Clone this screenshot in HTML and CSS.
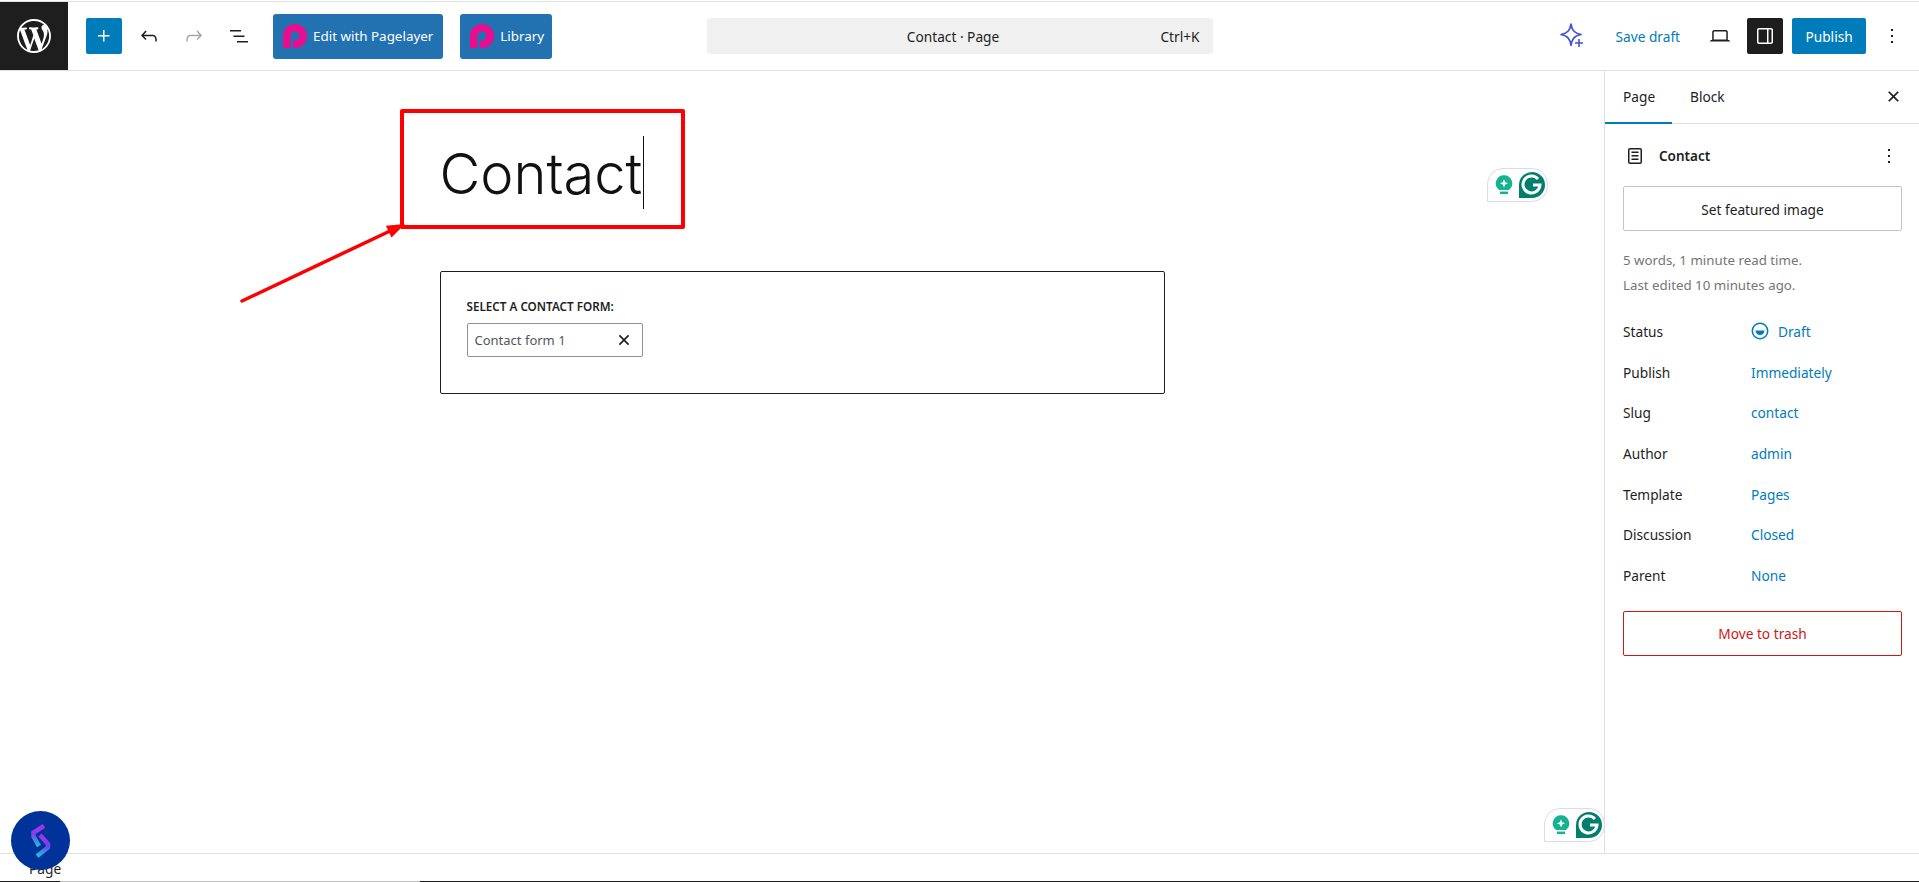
FILE: index.html
```html
<!DOCTYPE html>
<html lang="en">
<head>
<meta charset="utf-8">
<title>Contact</title>
<link rel="stylesheet" href="styles.css">
</head>
<body>
<header class="topbar">
  <div class="tools">
    <div class="wp-logo"><svg width="34" height="34" viewBox="0 0 20 20"><path fill="#fff" d="M20 10c0-5.51-4.49-10-10-10C4.48 0 0 4.49 0 10c0 5.52 4.48 10 10 10 5.51 0 10-4.48 10-10zM7.78 15.37L4.37 6.22c.55-.02 1.17-.08 1.17-.08.5-.06.44-1.13-.06-1.11 0 0-1.45.11-2.37.11-.18 0-.37 0-.58-.01C4.12 2.69 6.87 1.11 10 1.11c2.33 0 4.45.87 6.05 2.34-.68-.11-1.65.39-1.65 1.58 0 .74.45 1.36.9 2.1.35.61.55 1.36.55 2.46 0 1.49-1.4 5-1.4 5l-3.03-8.37c.54-.02.82-.17.82-.17.5-.05.44-1.25-.06-1.22 0 0-1.44.12-2.38.12-.87 0-2.33-.12-2.33-.12-.5-.03-.56 1.2-.06 1.22l.92.08 1.26 3.41zM17.41 10c.24-.64.74-1.87.43-4.25.7 1.29 1.05 2.71 1.05 4.25 0 3.29-1.73 6.24-4.4 7.78.97-2.59 1.94-5.2 2.92-7.78zM6.1 18.09C3.12 16.65 1.11 13.53 1.11 10c0-1.3.23-2.48.72-3.59C3.25 10.3 4.67 14.2 6.1 18.09zm4.03-6.63l2.58 6.98c-.86.29-1.76.45-2.71.45-.79 0-1.57-.11-2.29-.33.81-2.38 1.62-4.74 2.42-7.1z"/></svg></div>
    <button class="icon-btn primary"><svg width="24" height="24" viewBox="0 0 24 24"><path fill="#fff" d="M11 12.5V17.5H12.5V12.5H17.5V11H12.5V6H11V11H6V12.5H11Z"/></svg></button>
    <button class="icon-btn"><svg width="24" height="24" viewBox="0 0 24 24"><path fill="#1e1e1e" d="M18.3 11.7c-.6-.6-1.4-.9-2.3-.9H6.7l2.9-3.3-1.1-1-4.5 5L8.5 16l1-1-2.7-2.7H16c.5 0 .9.2 1.3.5 1 1 1 3.4 1 4.5v.3h1.5v-.2c0-1.5 0-4.3-1.5-5.7z"/></svg></button>
    <button class="icon-btn"><svg width="24" height="24" viewBox="0 0 24 24"><path fill="#a7a7a7" d="M15.6 6.5l-1.1 1 2.9 3.3H8c-.9 0-1.7.3-2.3.9-1.4 1.5-1.4 4.2-1.4 5.6v.2h1.5v-.3c0-1.1 0-3.5 1-4.5.3-.3.7-.5 1.3-.5h9.2L14.5 15l1.1 1.1 4.6-4.6-4.6-5z"/></svg></button>
    <button class="icon-btn"><svg width="24" height="24" viewBox="0 0 24 24"><path fill="#1e1e1e" d="M3 6h11v1.5H3V6Zm3.5 5.5h11V13h-11v-1.5ZM21 17H10v1.5h11V17Z"/></svg></button>
    <a class="pl-btn first"><svg width="24" height="24" viewBox="0 0 24 24"><path fill="none" stroke="#ec0c8f" stroke-width="7.5" d="M3.750 24V12a8.250 8.250 0 1 1 8.250 8.250h-2"/></svg>Edit with Pagelayer</a>
    <a class="pl-btn"><svg width="24" height="24" viewBox="0 0 24 24"><path fill="none" stroke="#ec0c8f" stroke-width="7.5" d="M3.750 24V12a8.250 8.250 0 1 1 8.250 8.250h-2"/></svg>Library</a>
  </div>
  <div class="command"><span class="command-title">Contact · Page</span><span class="command-key">Ctrl+K</span></div>
  <div class="actions">
    <svg class="spark" width="30" height="30" viewBox="0 0 30 30"><path fill="none" stroke="#3f51d9" stroke-width="1.6" stroke-linejoin="round" d="M14 3c1 6 3 9 10 10.500c-7 1.500-9 4.500-10 11c-1-6.500-3-9.500-10-11C11 12 13 9 14 3Z"/><path stroke="#3f51d9" stroke-width="1.6" d="M22 18v8M18 22h8"/></svg>
    <a class="save">Save draft</a>
    <svg class="laptop" width="24" height="24" viewBox="0 0 24 24"><path fill="#1e1e1e" d="M20.5 16h-.7V8c0-1.100-.9-2-2-2H6.200c-1.100 0-2 .9-2 2v8h-.7c-.8 0-1.500.7-1.500 1.500h20c0-.8-.7-1.500-1.500-1.500zM5.700 8c0-.3.2-.5.500-.5h11.600c.3 0 .5.2.5.500v7.600H5.700V8z"/></svg>
    <button class="icon-btn dark"><svg width="24" height="24" viewBox="0 0 24 24"><path fill="#fff" d="M18 4H6c-1.100 0-2 .9-2 2v12c0 1.100.9 2 2 2h12c1.100 0 2-.9 2-2V6c0-1.100-.9-2-2-2zm-4 14.500H6c-.3 0-.5-.2-.5-.5V6c0-.3.2-.5.500-.5h8v13zm4.500-.5c0 .3-.2.5-.5.5h-2.500v-13H18c.3 0 .5.2.5.5v12z"/></svg></button>
    <button class="publish">Publish</button>
    <svg class="more" width="24" height="24" viewBox="0 0 24 24"><path fill="#1e1e1e" d="M13 19h-2v-2h2v2zm0-6h-2v-2h2v2zm0-6h-2V5h2v2z"/></svg>
  </div>
</header>

<main class="workspace">
  <section class="editor">
    <div class="column">
      <h1 class="post-title">Contact<span class="caret"></span></h1>
      <div class="form-block">
        <div class="form-label">SELECT A CONTACT FORM:</div>
        <div class="form-select"><span>Contact form 1</span><svg width="26" height="26" viewBox="0 0 24 24"><path fill="#1e1e1e" d="M12 13.06l3.712 3.713 1.061-1.06L13.061 12l3.713-3.712-1.06-1.06L12 10.938 8.288 7.227 7.227 8.289 10.939 12l-3.712 3.712 1.06 1.061L12 13.061z"/></svg></div>
      </div>
    </div>
    <div class="note-box"></div>
    <svg class="note-arrow" width="180" height="90" viewBox="0 0 180 90"><path fill="none" stroke="#f00" stroke-width="3.500" stroke-linecap="round" d="M4 82 152 12"/><path fill="#f00" d="M167 5 147.900 6.800 153.500 18.600Z"/></svg>
    <div class="grammarly one">
      <svg width="22" height="26" viewBox="0 0 22 26"><path fill="#14b392" d="M11 1a10 10 0 0 1 6 18H5a10 10 0 0 1 6-18Z"/><path fill="#14b392" d="M6 21h10v3H6z"/><path fill="#fff" d="M11 6l1.500 3.500L16 11l-3.500 1.500L11 16l-1.500-3.500L6 11l3.500-1.500Z"/></svg>
      <svg width="28" height="28" viewBox="0 0 28 28"><path fill="#027e6f" d="M14 1a13 13 0 1 1 0 26H1V14A13 13 0 0 1 14 1Z"/><path fill="none" stroke="#fff" stroke-width="3" d="M20 8a8.500 8.500 0 1 0 2 6h-7"/></svg>
    </div>
    <div class="grammarly two">
      <svg width="22" height="26" viewBox="0 0 22 26"><path fill="#14b392" d="M11 1a10 10 0 0 1 6 18H5a10 10 0 0 1 6-18Z"/><path fill="#14b392" d="M6 21h10v3H6z"/><path fill="#fff" d="M11 6l1.500 3.500L16 11l-3.500 1.500L11 16l-1.500-3.500L6 11l3.500-1.500Z"/></svg>
      <svg width="28" height="28" viewBox="0 0 28 28"><path fill="#027e6f" d="M14 1a13 13 0 1 1 0 26H1V14A13 13 0 0 1 14 1Z"/><path fill="none" stroke="#fff" stroke-width="3" d="M20 8a8.500 8.500 0 1 0 2 6h-7"/></svg>
    </div>
  </section>

  <aside class="sidebar">
    <div class="tabs">
      <span class="tab active">Page</span>
      <span class="tab">Block</span>
      <svg class="tab-close" width="27" height="27" viewBox="0 0 24 24"><path fill="#1e1e1e" d="M12 13.06l3.712 3.713 1.061-1.06L13.061 12l3.713-3.712-1.06-1.06L12 10.938 8.288 7.227 7.227 8.289 10.939 12l-3.712 3.712 1.06 1.061L12 13.061z"/></svg>
    </div>
    <div class="panel">
      <div class="doc-head">
        <svg width="24" height="24" viewBox="0 0 24 24"><path fill="#1e1e1e" d="M15.500 7.500h-7V9h7V7.500Zm-7 3.500h7v1.500h-7V11Zm7 3.500h-7V16h7v-1.500Z"/><path fill="#1e1e1e" d="M17 4H7a2 2 0 0 0-2 2v12a2 2 0 0 0 2 2h10a2 2 0 0 0 2-2V6a2 2 0 0 0-2-2ZM7 5.500h10a.5.5 0 0 1 .5.5v12a.5.5 0 0 1-.5.5H7a.5.5 0 0 1-.5-.5V6a.5.5 0 0 1 .5-.5Z"/></svg>
        <strong>Contact</strong>
        <svg class="doc-more" width="24" height="24" viewBox="0 0 24 24"><path fill="#1e1e1e" d="M13 19h-2v-2h2v2zm0-6h-2v-2h2v2zm0-6h-2V5h2v2z"/></svg>
      </div>
      <button class="wide-btn">Set featured image</button>
      <p class="meta">5 words, 1 minute read time.<br>Last edited 10 minutes ago.</p>
      <dl class="rows">
        <div class="row"><dt>Status</dt><dd><svg class="draft-icon" width="18" height="18" viewBox="0 0 18 18"><circle cx="9" cy="9" r="7.700" fill="none" stroke="#007cba" stroke-width="1.500"/><path fill="#007cba" d="M4.500 8.500h9a4.500 4.500 0 0 1-9 0Z"/></svg>Draft</dd></div>
        <div class="row"><dt>Publish</dt><dd>Immediately</dd></div>
        <div class="row"><dt>Slug</dt><dd>contact</dd></div>
        <div class="row"><dt>Author</dt><dd>admin</dd></div>
        <div class="row"><dt>Template</dt><dd>Pages</dd></div>
        <div class="row"><dt>Discussion</dt><dd>Closed</dd></div>
        <div class="row"><dt>Parent</dt><dd>None</dd></div>
      </dl>
      <button class="wide-btn danger">Move to trash</button>
    </div>
  </aside>
</main>

<footer class="statusbar">
  <span class="crumb">Page</span>
  <div class="taskline"><i class="seg-a"></i><i class="seg-b"></i><i class="seg-c"></i></div>
</footer>

<div class="chat-bubble"><svg width="20" height="34" viewBox="0 0 20 34"><defs><linearGradient id="sg1" gradientUnits="userSpaceOnUse" x1="10" y1="0" x2="6" y2="23"><stop offset="0" stop-color="#b52be8"/><stop offset="0.500" stop-color="#7a44ea"/><stop offset="1" stop-color="#12cfd8"/></linearGradient><linearGradient id="sg2" gradientUnits="userSpaceOnUse" x1="12" y1="10" x2="8" y2="33"><stop offset="0" stop-color="#b52be8"/><stop offset="0.500" stop-color="#6a47ea"/><stop offset="1" stop-color="#12cfd8"/></linearGradient></defs><path fill="none" stroke="url(#sg1)" stroke-width="4.500" d="M13 2 2.500 8.500v4L8 22"/><path fill="none" stroke="url(#sg2)" stroke-width="4.500" d="M9 11l8 9v3.500L6 32"/></svg></div>
</body>
</html>
```

FILE: styles.css
```css
* { box-sizing: border-box; }
html, body { height: 100%; }
body {
  margin: 0;
  display: flex;
  flex-direction: column;
  height: 882px;
  overflow: hidden;
  padding-top: 1px;
  background: #fff;
  color: #1e1e1e;
  font-family: "Noto Sans", "Open Sans", sans-serif;
  font-size: 13.7px;
  position: relative;
}
button { font: inherit; border: 0; padding: 0; background: none; color: inherit; }
p, h1, dl, dd { margin: 0; }

.topbar {
  flex: none;
  height: 70px;
  border-top: 1px solid #e0e0e0;
  border-bottom: 1px solid #e0e0e0;
  display: grid;
  grid-template-columns: 1fr 506px 1fr;
  align-items: center;
}
.tools { display: flex; align-items: center; height: 100%; }
.wp-logo {
  width: 68px;
  height: 100%;
  background: #1e1e1e;
  display: flex;
  align-items: center;
  justify-content: center;
  margin-right: 18px;
}
.icon-btn {
  width: 36px;
  height: 36px;
  border-radius: 2px;
  display: flex;
  align-items: center;
  justify-content: center;
  margin-right: 9px;
}
.icon-btn.primary { background: #007cba; }
.icon-btn.dark { background: #1e1e1e; margin-right: 9px; }
.pl-btn {
  height: 45px;
  padding: 0 8px 0 10px;
  margin-right: 17px;
  background: #2271b1;
  border-radius: 3px;
  color: #fff;
  font-size: 13.400px;
  display: flex;
  align-items: center;
  gap: 6px;
}
.pl-btn.first { margin-left: 7px; padding-right: 10px; }

.command {
  height: 36px;
  background: #f0f0f0;
  border-radius: 4px;
  position: relative;
  display: flex;
  align-items: center;
  justify-content: center;
  padding-right: 13px;
}
.command-key { position: absolute; right: 13px; }

.actions { display: flex; align-items: center; height: 100%; padding-left: 344px; }
.spark { margin-right: 29px; }
.save { color: #007cba; margin-right: 28px; }
.laptop { margin-right: 15px; }
.publish {
  width: 74px;
  height: 36px;
  background: #007cba;
  color: #fff;
  border-radius: 2px;
  margin-right: 14px;
}

.workspace { flex: 1; display: flex; min-height: 0; }
.editor { flex: 1; position: relative; }
.column { width: 725px; margin: 0 auto; }
.post-title {
  font-family: Inter, sans-serif;
  font-weight: 350;
  font-size: 56px;
  line-height: 77px;
  height: 73px;
  margin-top: 65px;
  color: #111;
}
.caret {
  display: inline-block;
  width: 1px;
  height: 73px;
  margin-left: 1px;
  background: #111;
  vertical-align: top;
}
.form-block {
  margin-top: 62px;
  height: 123px;
  border: 1px solid #1e1e1e;
  border-radius: 2px;
  padding: 26px 26px;
}
.form-label { font-size: 11.700px; font-weight: 600; line-height: 16px; }
.form-select {
  margin-top: 9px;
  width: 176px;
  height: 34px;
  border: 1px solid #8c8f94;
  border-radius: 2px;
  padding: 0 5px 0 7px;
  display: flex;
  align-items: center;
  justify-content: space-between;
  color: #50575e;
  font-size: 13px;
}
.note-box {
  position: absolute;
  left: 400px;
  top: 38px;
  width: 285px;
  height: 120px;
  border: 4px solid #f00;
  border-radius: 2px;
}
.note-arrow { position: absolute; left: 238px; top: 148px; }
.grammarly {
  position: absolute;
  width: 61px;
  height: 34px;
  background: #fff;
  border: 1px solid #d9dce6;
  border-radius: 16px 16px 16px 0;
  display: flex;
  align-items: center;
  justify-content: center;
  gap: 5px;
}
.grammarly svg:first-child { width: 18px; height: 22px; }
.grammarly svg:last-child { width: 28px; height: 28px; }
.grammarly.one { left: 1487px; top: 97px; padding-left: 6px; }
.grammarly.two { left: 1544px; top: 737px; padding-left: 5px; }

.sidebar { width: 315px; flex: none; border-left: 1px solid #e0e0e0; }
.tabs {
  height: 53px;
  border-bottom: 1px solid #e0e0e0;
  display: flex;
  align-items: stretch;
  position: relative;
}
.tab {
  padding: 0 18px;
  display: flex;
  align-items: center;
  margin-bottom: -1px;
  border-bottom: 2px solid transparent;
}
.tab.active { border-bottom-color: #007cba; width: 67px; }
.tab-close { margin: 12px 12px 0 auto; }
.panel { padding: 20px 17px 0 18px; }
.doc-head { display: flex; align-items: center; height: 24px; gap: 12px; }
.doc-head strong { font-weight: 600; font-size: 13.500px; }
.doc-more { margin-left: auto; margin-right: 1px; }
.wide-btn {
  display: block;
  width: 279px;
  height: 45px;
  margin-top: 18px;
  padding-top: 1px;
  background: #fff;
  border: 1px solid #c3c4c7;
  border-radius: 2px;
}
.meta { margin-top: 17px; line-height: 25px; color: #757575; font-size: 13.300px; }
.rows { margin-top: 13.500px; }
.row { display: flex; align-items: center; height: 40.600px; }
.row dt { width: 128px; }
.row dd { color: #007cba; display: flex; align-items: center; }
.draft-icon { margin-right: 9px; margin-top: -2px; }
.danger { border-color: #cc1818; color: #cc1818; margin-top: 15px; }

.statusbar {
  flex: none;
  height: 29px;
  border-top: 1px solid #e0e0e0;
  display: flex;
  flex-direction: column;
  justify-content: flex-end;
  position: relative;
}
.crumb { position: absolute; left: 29px; top: 5px; line-height: 20px; }
.taskline { display: flex; height: 1px; }
.taskline i { display: block; height: 1px; }
.seg-a { width: 60px; background: #1e1e1e; }
.seg-b { width: 360px; background: #c0c0c0; }
.seg-c { flex: 1; background: #1e1e1e; }

.chat-bubble {
  position: absolute;
  left: 11px;
  top: 811px;
  width: 59px;
  height: 59px;
  border-radius: 50%;
  background: #003399;
  display: flex;
  align-items: center;
  justify-content: center;
}
```
